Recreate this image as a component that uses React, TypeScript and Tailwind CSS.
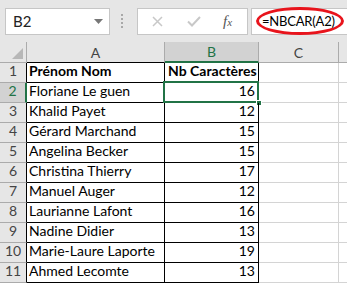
import React from "react";

const rows: [string, string][] = [
    ["Prénom Nom", "Nb Caractères"],
    ["Floriane Le guen", "16"],
    ["Khalid Payet", "12"],
    ["Gérard Marchand", "15"],
    ["Angelina Becker", "15"],
    ["Christina Thierry", "17"],
    ["Manuel Auger", "12"],
    ["Laurianne Lafont", "16"],
    ["Nadine Didier", "13"],
    ["Marie-Laure Laporte", "19"],
    ["Ahmed Lecomte", "13"],
];

function FormulaBar() {
    return (
        <div className="h-[42px] bg-[#e6e6e6] flex items-start pt-[8px]">
            <div className="ml-[5px] w-[105px] h-[27px] bg-white border border-[#c6c6c6] flex items-center justify-between pl-[7px] pr-[6px]">
                <span className="text-[15px] text-[#222]">B2</span>
                <svg width="9" height="5" viewBox="0 0 9 5">
                    <path d="M0 0h9L4.5 5z" fill="#777" />
                </svg>
            </div>
            <div className="ml-[11px] mt-[6px] flex flex-col gap-[2px]">
                <span className="block w-[2px] h-[2px] bg-[#a8a8a8]" />
                <span className="block w-[2px] h-[2px] bg-[#a8a8a8]" />
                <span className="block w-[2px] h-[2px] bg-[#a8a8a8]" />
                <span className="block w-[2px] h-[2px] bg-[#a8a8a8]" />
            </div>
            <div className="ml-[14px] w-[111px] h-[27px] bg-white border border-[#c6c6c6] flex items-center">
                <svg className="ml-[14px]" width="11" height="11" viewBox="0 0 11 11">
                    <path d="M1 1l9 9M10 1l-9 9" stroke="#c8c8c8" strokeWidth="1.5" />
                </svg>
                <svg className="ml-[24px]" width="14" height="11" viewBox="0 0 14 11">
                    <path d="M1 5.5l4 4L13 1" stroke="#c8c8c8" strokeWidth="2" fill="none" />
                </svg>
                <span className="ml-[22px] text-[15px] italic text-[#555] font-['Liberation_Serif',serif]">
                    f<span className="text-[11px]">x</span>
                </span>
            </div>
            <div className="ml-[3px] flex-1 h-[27px] bg-white border border-[#c6c6c6] border-r-0 relative">
                <div className="absolute left-[4px] -top-[2px] w-[88px] h-[28px] rounded-[50%/50%] border-[3px] border-[#e8141c]" />
                <span className="absolute left-[10px] top-[3px] text-[13px] tracking-[-0.2px] text-black">=NBCAR(A2)</span>
            </div>
        </div>
    );
}

export default function App() {
    return (
        <div className="w-[347px] h-[284px] overflow-hidden bg-white font-['Lato',sans-serif] text-black">
            <FormulaBar />
            <div className="grid grid-cols-[27px_138px_94px_80px_1fr]">
                {/* header row */}
                <div className="h-[21px] bg-[#e6e6e6] border-r border-b border-[#ababab] relative">
                    <svg className="absolute right-[3px] bottom-[3px]" width="11" height="11" viewBox="0 0 11 11">
                        <path d="M11 0v11H0z" fill="#b7b7b7" />
                    </svg>
                </div>
                <div className="h-[21px] bg-[#e6e6e6] border-r border-b border-r-[#ababab] border-b-black flex items-center justify-center text-[14px] text-[#444]">A</div>
                <div className="h-[21px] bg-[#d2d2d2] border-r border-r-[#ababab] border-b-2 border-b-[#217346] flex items-center justify-center text-[14px] text-[#217346]">B</div>
                <div className="h-[21px] bg-[#e6e6e6] border-r border-b border-[#ababab] flex items-center justify-center text-[14px] text-[#444]">C</div>
                <div className="h-[21px] bg-[#e6e6e6] border-b border-[#ababab]" />
                {rows.map(([name, count], i) => {
                    const r = i + 1;
                    const sel = r === 2;
                    return (
                        <React.Fragment key={r}>
                            <div
                                className={
                                    sel
                                        ? "h-[20px] bg-[#d2d2d2] border-r-2 border-r-[#217346] border-b border-b-[#ababab] flex items-end justify-center pb-px text-[14px] text-[#217346]"
                                        : "h-[20px] bg-[#e6e6e6] border-r border-r-black border-b border-b-[#ababab] flex items-end justify-center pb-px text-[14px] text-[#444]"
                                }
                            >
                                {r}
                            </div>
                            <div className={`h-[20px] border-r border-b border-black flex items-end pl-[2px] pb-px text-[14px] whitespace-nowrap ${r === 1 ? "font-bold" : ""}`}>
                                {name}
                            </div>
                            <div className={`h-[20px] border-r border-b border-black flex items-end pb-px text-[14px] whitespace-nowrap relative ${r === 1 ? "font-bold justify-start pl-[3px]" : "justify-end pr-[3px]"}`}>
                                {count}
                                {sel && (
                                    <>
                                        <div className="absolute -left-[2px] -top-[2px] -right-px -bottom-px border-2 border-[#217346]" />
                                        <div className="absolute -right-[4px] -bottom-[4px] w-[6px] h-[6px] bg-[#217346] border border-white" />
                                    </>
                                )}
                            </div>
                            <div className="h-[20px] border-r border-b border-[#d4d4d4]" />
                            <div className="h-[20px] border-b border-[#d4d4d4]" />
                        </React.Fragment>
                    );
                })}
            </div>
        </div>
    );
}
